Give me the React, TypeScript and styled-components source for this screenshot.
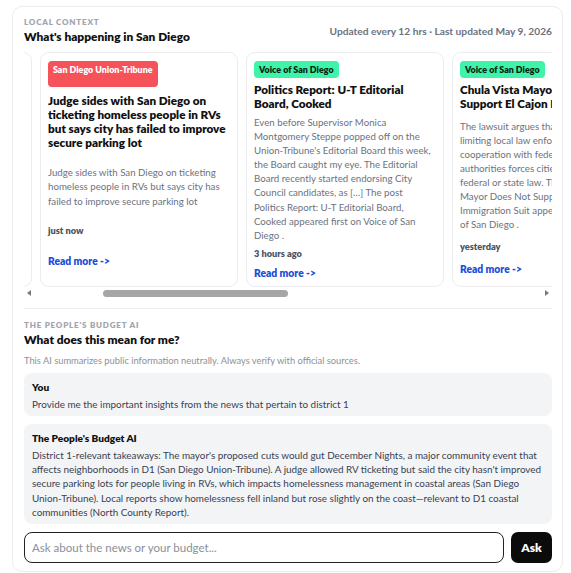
import * as React from "react";
import styled, { createGlobalStyle } from "styled-components";

const GlobalStyle = createGlobalStyle`
	body {
		margin: 0;
		background: #fff;
		font-family: Lato, "Liberation Sans", sans-serif;
		color: #111;
	}
`;

type Story = {
	source: string;
	tone: "red" | "green";
	title: string;
	summary: string;
	when: string;
};

const STORIES: Story[] = [
	{
		source: "Voice of San Diego",
		tone: "green",
		title: "December Nights faces cuts in mayor's budget",
		summary: "Balboa Park's holiday festival could be scaled back.",
		when: "2 hours ago",
	},
	{
		source: "San Diego Union-Tribune",
		tone: "red",
		title: "Judge sides with San Diego on ticketing homeless people in RVs but says city has failed to improve secure parking lot",
		summary:
			"Judge sides with San Diego on ticketing\nhomeless people in RVs but says city has\nfailed to improve secure parking lot",
		when: "just now",
	},
	{
		source: "Voice of San Diego",
		tone: "green",
		title: "Politics Report: U-T Editorial Board, Cooked",
		summary:
			"Even before Supervisor Monica\nMontgomery Steppe popped off on the\nUnion-Tribune's Editorial Board this week,\nthe Board caught my eye. The Editorial\nBoard recently started endorsing City\nCouncil candidates, as […] The post\nPolitics Report: U-T Editorial Board,\nCooked appeared first on Voice of San\nDiego .",
		when: "3 hours ago",
	},
	{
		source: "Voice of San Diego",
		tone: "green",
		title: "Chula Vista Mayor Does Not Support El Cajon Immigration Suit",
		summary:
			"The lawsuit argues that the state law\nlimiting local law enforcement agency\ncooperation with federal immigration\nauthorities forces cities into violating\nfederal or state law. The post Chula Vista\nMayor Does Not Support El Cajon\nImmigration Suit appeared first on Voice\nof San Diego .",
		when: "yesterday",
	},
	{
		source: "North County Report",
		tone: "green",
		title: "Homelessness falls inland, rises on the coast",
		summary: "The annual count shows a mixed picture across the county.",
		when: "yesterday",
	},
	{
		source: "San Diego Union-Tribune",
		tone: "red",
		title: "Council weighs library hours ahead of budget vote",
		summary: "Branch hours could shrink under the proposal.",
		when: "2 days ago",
	},
	{
		source: "Voice of San Diego",
		tone: "green",
		title: "What the budget deficit means for parks",
		summary: "Recreation centers may see reduced staffing.",
		when: "3 days ago",
	},
];

const Page = styled.div`
	padding: 6px 8px 1px 12px;
`;

const Panel = styled.main`
	border: 1px solid #ececee;
	border-radius: 10px;
	padding: 10px 10px 8px 11px;
	background: #fff;
`;

const NewsSection = styled.section`
	border-bottom: 1px solid #eeeef0;
	padding-bottom: 9px;
`;

const SectionHeader = styled.header`
	display: flex;
	justify-content: space-between;
	align-items: center;
`;

const Eyebrow = styled.div`
	font-size: 8px;
	font-weight: 800;
	letter-spacing: 0.1em;
	text-transform: uppercase;
	color: #a1a5ad;
	line-height: 11px;
`;

const Heading = styled.h2`
	margin: 1px 0 0;
	font-size: 11.9px;
	font-weight: 800;
	line-height: 15px;
	color: #111;
`;

const UpdatedNote = styled.div`
	font-size: 10.2px;
	font-weight: 700;
	color: #6b7280;
`;

const Scroller = styled.div`
	display: flex;
	gap: 8px;
	margin-top: 8px;
	overflow-x: auto;
	scrollbar-width: none;
`;

const ScrollBar = styled.div`
	display: flex;
	align-items: center;
	height: 11px;
	margin-top: 1px;
`;

const ArrowButton = styled.span<{ $dir: "left" | "right" }>`
	flex: 0 0 12px;
	display: flex;
	align-items: center;
	padding-left: ${(p) => (p.$dir === "left" ? "3px" : "5px")};
	box-sizing: border-box;

	&::before {
		content: "";
		border-top: 3.5px solid transparent;
		border-bottom: 3.5px solid transparent;
		${(p) => (p.$dir === "left" ? "border-right" : "border-left")}: 4px solid #7a7a7a;
	}
`;

const Track = styled.div`
	flex: 1;
	display: flex;
	height: 7px;
`;

const Thumb = styled.div`
	height: 7px;
	border-radius: 4px;
	background: #a6a6a6;
`;

const Card = styled.article`
	flex: 0 0 198px;
	box-sizing: border-box;
	display: flex;
	flex-direction: column;
	border: 1px solid #ececee;
	border-radius: 9px;
	padding: 8px 7px 6px;
	background: #fff;
`;

const Badge = styled.span<{ $tone: "red" | "green" }>`
	align-self: flex-start;
	font-size: 8.9px;
	font-weight: 800;
	line-height: 11px;
	padding: ${(p) => (p.$tone === "red" ? "3px 5px 12px" : "3px 5px")};
	border-radius: 4px;
	background: ${(p) => (p.$tone === "red" ? "#f5525a" : "#3ef4a8")};
	color: ${(p) => (p.$tone === "red" ? "#fff" : "#0b1f16")};
`;

const CardTitle = styled.h3<{ $afterTall: boolean }>`
	margin: ${(p) => (p.$afterTall ? "6px" : "4px")} 0 0;
	font-size: 11.7px;
	font-weight: 800;
	line-height: 14px;
	color: #111;
`;

const CardBody = styled.div`
	flex: 1;
	display: flex;
	flex-direction: column;
	justify-content: space-evenly;
	gap: 6px;
	padding-top: 5px;
`;

const Summary = styled.p`
	margin: 0;
	font-size: 9.7px;
	line-height: 14.1px;
	white-space: pre-line;
	color: #6b7280;
`;

const Meta = styled.div`
	font-size: 9.2px;
	font-weight: 800;
	line-height: 12px;
	color: #4b5563;
`;

const ReadMore = styled.a`
	font-size: 10.3px;
	font-weight: 800;
	line-height: 14px;
	color: #1d4ed8;
	text-decoration: none;
`;

const BudgetSection = styled.section`
	padding-top: 11px;
`;

const Disclaimer = styled.p`
	margin: 7px 0 6px;
	font-size: 9.3px;
	line-height: 13px;
	color: #8b9098;
`;

const Thread = styled.div`
	display: flex;
	flex-direction: column;
	gap: 8px;
`;

const Bubble = styled.div`
	background: #f3f4f6;
	border-radius: 8px;
	padding: 7px 8px 5px;
`;

const Speaker = styled.div`
	font-size: 10.1px;
	font-weight: 800;
	line-height: 15px;
	margin-bottom: 2px;
	color: #111;
`;

const Message = styled.div`
	font-size: 9.9px;
	line-height: 14.2px;
	color: #374151;
`;

const AskRow = styled.form`
	display: flex;
	gap: 7px;
	margin-top: 8px;
`;

const AskInput = styled.input`
	flex: 1;
	height: 31px;
	box-sizing: border-box;
	border: 1.5px solid #222;
	border-radius: 8px;
	padding: 0 7px;
	font-family: inherit;
	font-size: 11.5px;
	color: #111;
	&::placeholder {
		color: #8a8f98;
	}
`;

const AskButton = styled.button`
	width: 41px;
	height: 31px;
	border: none;
	border-radius: 7px;
	background: #0b0b0b;
	color: #fff;
	font-family: inherit;
	font-size: 12px;
	font-weight: 800;
`;

function NewsCard({ story }: { story: Story }) {
	return (
		<Card>
			<Badge $tone={story.tone}>{story.source}</Badge>
			<CardTitle $afterTall={story.tone === "red"}>{story.title}</CardTitle>
			<CardBody>
				<Summary>{story.summary}</Summary>
				<Meta>{story.when}</Meta>
				<ReadMore href="#">Read more -&gt;</ReadMore>
			</CardBody>
		</Card>
	);
}

export default function App() {
	const scrollRef = React.useRef<HTMLDivElement>(null);
	const [thumb, setThumb] = React.useState({ start: 0, size: 1 });

	const syncThumb = () => {
		const el = scrollRef.current;
		if (!el) return;
		const max = el.scrollWidth - el.clientWidth;
		const size = el.clientWidth / el.scrollWidth;
		setThumb({ start: max > 0 ? (el.scrollLeft / max) * (1 - size) : 0, size });
	};

	React.useLayoutEffect(() => {
		if (scrollRef.current) scrollRef.current.scrollLeft = 190;
		syncThumb();
	}, []);

	return (
		<Page>
			<GlobalStyle />
			<Panel>
				<NewsSection>
					<SectionHeader>
						<div>
							<Eyebrow>Local context</Eyebrow>
							<Heading>What's happening in San Diego</Heading>
						</div>
						<UpdatedNote>Updated every 12 hrs · Last updated May 9, 2026</UpdatedNote>
					</SectionHeader>
					<Scroller ref={scrollRef} onScroll={syncThumb}>
						{STORIES.map((s, i) => (
							<NewsCard key={i} story={s} />
						))}
					</Scroller>
					<ScrollBar>
						<ArrowButton $dir="left" />
						<Track>
							<Thumb style={{ marginLeft: `${thumb.start * 100}%`, width: `${thumb.size * 100}%` }} />
						</Track>
						<ArrowButton $dir="right" />
					</ScrollBar>
				</NewsSection>
				<BudgetSection>
					<Eyebrow>The People's Budget AI</Eyebrow>
					<Heading>What does this mean for me?</Heading>
					<Disclaimer>
						This AI summarizes public information neutrally. Always verify with official sources.
					</Disclaimer>
					<Thread>
						<Bubble>
							<Speaker>You</Speaker>
							<Message>Provide me the important insights from the news that pertain to district 1</Message>
						</Bubble>
						<Bubble>
							<Speaker>The People's Budget AI</Speaker>
							<Message>
								District 1-relevant takeaways: The mayor's proposed cuts would gut December Nights, a major
								community event that affects neighborhoods in D1 (San Diego Union-Tribune). A judge allowed RV
								ticketing but said the city hasn't improved secure parking lots for people living in RVs, which
								impacts homelessness management in coastal areas (San Diego Union-Tribune). Local reports show
								homelessness fell inland but rose slightly on the coast—relevant to D1 coastal communities (North
								County Report).
							</Message>
						</Bubble>
					</Thread>
					<AskRow onSubmit={(e) => e.preventDefault()}>
						<AskInput placeholder="Ask about the news or your budget..." />
						<AskButton type="submit">Ask</AskButton>
					</AskRow>
				</BudgetSection>
			</Panel>
		</Page>
	);
}
